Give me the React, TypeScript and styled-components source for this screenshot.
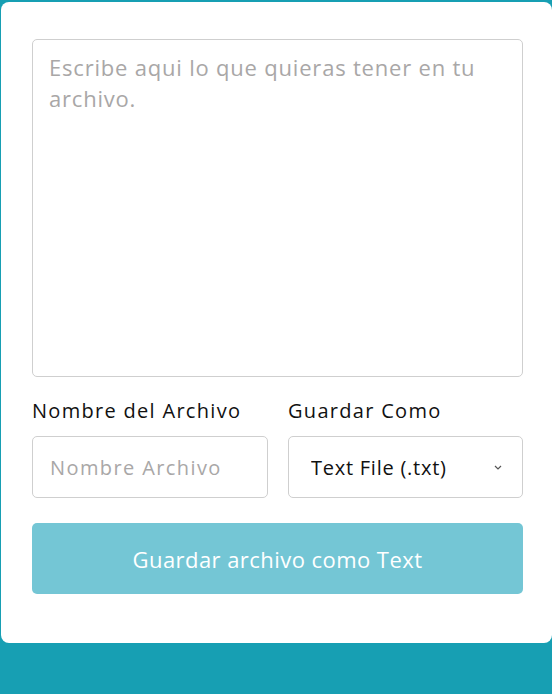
import React from "react";
import styled, { createGlobalStyle } from "styled-components";

const Global = createGlobalStyle`
  html, body { margin: 0; padding: 0; }
  body {
    background: #179fb3;
    font-family: "Open Sans", "DejaVu Sans", sans-serif;
    height: 694px;
    overflow: hidden;
  }
`;

const Page = styled.div`
  padding-top: 2px;
  padding-left: 1px;
`;

const Card = styled.div`
  width: 551px;
  box-sizing: border-box;
  background: #ffffff;
  border-radius: 8px;
  padding: 37px 29px 49px 31px;
  display: flex;
  flex-direction: column;
`;

const TextArea = styled.textarea`
  box-sizing: border-box;
  width: 100%;
  height: 338px;
  border: 1px solid #cfcfcf;
  border-radius: 5px;
  padding: 12px 16px;
  font-family: inherit;
  font-size: 22px;
  letter-spacing: 0.8px;
  line-height: 31px;
  color: #222;
  resize: none;
  outline: none;
  &::placeholder { color: #a9a7a7; }
`;

const Row = styled.div`
  display: grid;
  grid-template-columns: 236px 235px;
  column-gap: 20px;
  margin-top: 20px;
`;

const Field = styled.div`
  display: flex;
  flex-direction: column;
`;

const Label = styled.label`
  font-size: 20px;
  letter-spacing: 1.3px;
  line-height: 27px;
  color: #111;
  margin-bottom: 12px;
`;

const Input = styled.input`
  box-sizing: border-box;
  height: 62px;
  width: 100%;
  border: 1px solid #cfcfcf;
  border-radius: 5px;
  padding: 0 17px;
  font-family: inherit;
  font-size: 20px;
  letter-spacing: 1.4px;
  color: #222;
  outline: none;
  &::placeholder { color: #a9a7a7; }
`;

const SelectWrap = styled.div`
  position: relative;
`;

const Select = styled.select`
  box-sizing: border-box;
  appearance: none;
  height: 62px;
  width: 100%;
  border: 1px solid #cfcfcf;
  border-radius: 5px;
  padding: 0 22px;
  font-family: inherit;
  font-size: 20px;
  letter-spacing: 0.75px;
  color: #111;
  background: #fff;
  outline: none;
`;

const Chevron = styled.svg`
  position: absolute;
  right: 21px;
  top: 29px;
  pointer-events: none;
`;

const Button = styled.button`
  margin-top: 25px;
  height: 71px;
  width: 100%;
  border: none;
  border-radius: 5px;
  background: #74c6d5;
  color: #ffffff;
  font-family: inherit;
  font-size: 22px;
  letter-spacing: 0.45px;
`;

export default function App() {
  return (
    <Page>
      <Global />
      <Card>
        <TextArea placeholder="Escribe aqui lo que quieras tener en tu archivo." />
        <Row>
          <Field>
            <Label>Nombre del Archivo</Label>
            <Input placeholder="Nombre Archivo" />
          </Field>
          <Field>
            <Label>Guardar Como</Label>
            <SelectWrap>
              <Select defaultValue="txt">
                <option value="txt">Text File (.txt)</option>
              </Select>
              <Chevron width="8" height="5" viewBox="0 0 8 5">
                <path d="M1 1l3 3 3-3" fill="none" stroke="#555" strokeWidth="1.2" />
              </Chevron>
            </SelectWrap>
          </Field>
        </Row>
        <Button>Guardar archivo como Text</Button>
      </Card>
    </Page>
  );
}
